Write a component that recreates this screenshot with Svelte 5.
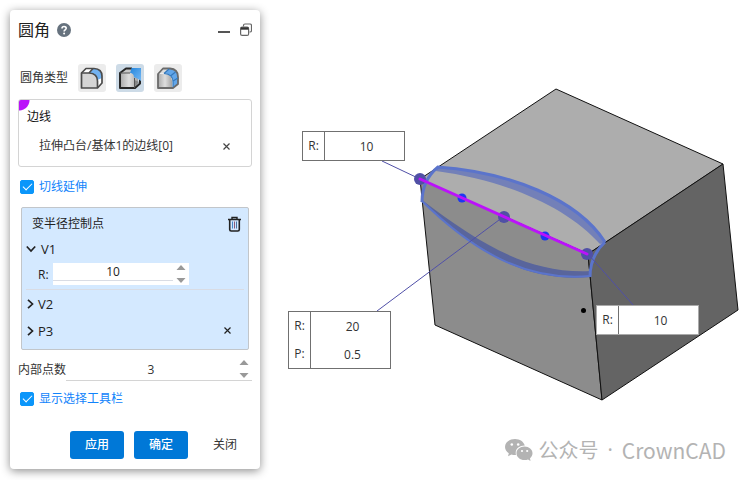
<script lang="ts">
	let filletType = $state('variable');
	let tangent = $state(true);
	let showToolbar = $state(true);
	let expanded = $state(true);
	let radius = $state(10);
	let count = $state(3);

	const filletTypes = [
		{ id: 'constant', label: '等半径' },
		{ id: 'variable', label: '变半径' },
		{ id: 'face', label: '面圆角' }
	];

	const callouts = [
		{ id: 'v1', x: 302, y: 131, rows: [{ name: 'R:', value: '10' }] },
		{
			id: 'p3',
			x: 288,
			y: 311,
			rows: [
				{ name: 'R:', value: '20' },
				{ name: 'P:', value: '0.5' }
			]
		},
		{ id: 'v2', x: 596, y: 305, rows: [{ name: 'R:', value: '10' }] }
	];
</script>

{#snippet spinner(up: () => void, down: () => void)}
	<span class="spinner">
		<button aria-label="增加" onclick={up}>
			<svg width="10" height="5" viewBox="0 0 10 5"><path d="M5 0 9.500 5H.5Z" /></svg>
		</button>
		<button aria-label="减少" onclick={down}>
			<svg width="10" height="5" viewBox="0 0 10 5"><path d="M5 5 9.500 0H.5Z" /></svg>
		</button>
	</span>
{/snippet}

<main class="workspace">
	<svg class="scene" aria-hidden="true">
		<g stroke="#111" stroke-width="1" stroke-linejoin="round">
			<path fill="#adadad" d="M420 179 556 89 723 164 588 254Z" />
			<path fill="#8c8c8c" d="M420 179 588 254 602 400 435 325Z" />
			<path fill="#646464" d="M588 254 723 164 738 310 602 400Z" />
		</g>
		<!-- fillet preview -->
		<path
			fill="#7380b8"
			d="M438 167C510 172 577 199 605 242L600 244C567 207 505 180 436 171Z"
		/>
		<path fill="#59659c" d="M422 201C472 250 525 283 590 277V271C525 274 475 240 422 200Z" />
		<g fill="none" stroke="#5b74cb" stroke-width="2">
			<path d="M437 167C510 172 577 199 605 242" stroke-width="3" />
			<path d="M422 201C472 250 525 282 590 276" />
			<path d="M438 167Q422 180 422 202" stroke-width="3" />
			<path d="M605 242Q590 256 590 277" stroke-width="3" />
		</g>
		<g stroke="#5050a8" stroke-width="1">
			<path d="M382 161 420 179M377 311 503 217M588 254 634 306" />
		</g>
		<g fill="#5050a5">
			<circle cx="420" cy="179" r="6" />
			<circle cx="504" cy="217" r="6" />
			<circle cx="587" cy="254" r="6" />
		</g>
		<g fill="#1c38f0">
			<circle cx="462" cy="198" r="4.500" />
			<circle cx="545" cy="236" r="4.500" />
		</g>
		<path d="M420 179 587 254" stroke="#bb12fa" stroke-width="3" stroke-linecap="round" />
		<circle cx="583.500" cy="310.500" r="2.500" fill="#000" />
	</svg>

	{#each callouts as callout (callout.id)}
		<div class="callout {callout.id}" style:left="{callout.x}px" style:top="{callout.y}px">
			{#each callout.rows as row (row.name)}
				<label>
					<span>{row.name}</span>
					<input type="text" value={row.value} />
				</label>
			{/each}
		</div>
	{/each}

	<section class="panel">
		<header>
			<h1>圆角</h1>
			<button class="plain" aria-label="帮助">
				<svg width="14" height="14" viewBox="0 0 14 14">
					<circle cx="7" cy="7" r="7" fill="#66727e" />
					<path
						d="M5 5.600C5 2.900 9.200 3 9.200 5.300 9.200 6.800 7.100 6.800 7.100 8.400"
						fill="none"
						stroke="#fff"
						stroke-width="1.600"
					/>
					<circle cx="7.100" cy="10.500" r="1" fill="#fff" />
				</svg>
			</button>
			<span class="tools">
				<button class="plain" aria-label="最小化">
					<svg width="12" height="14" viewBox="0 0 12 14"><path d="M0 9H12" stroke="#555" stroke-width="2" /></svg>
				</button>
				<button class="plain" aria-label="还原">
					<svg width="12" height="14" viewBox="0 0 12 14" fill="none" stroke="#666">
						<path d="M3.500 3.500V2.500Q3.500 1 5 1H10Q11.500 1 11.500 2.500V7.500Q11.500 9 10 9H9.500" stroke-width="1.200" />
						<rect x=".6" y="4.200" width="8" height="8.200" rx="1.500" fill="#fff" stroke-width="1.200" />
						<path d="M.8 5.500H8.500" stroke="#333" stroke-width="2.400" />
					</svg>
				</button>
			</span>
		</header>

		<div class="types">
			<span>圆角类型</span>
			{#each filletTypes as type (type.id)}
				<button
					aria-label={type.label}
					class:active={filletType === type.id}
					onclick={() => (filletType = type.id)}
				>
					<svg width="24" height="24" viewBox="0 0 24 24" stroke-linejoin="round">
						<defs>
							<linearGradient id="metal-{type.id}">
								<stop offset="0" stop-color="#a9a9a9" />
								<stop offset=".5" stop-color="#dedede" />
								<stop offset="1" stop-color="#a4a4a4" />
							</linearGradient>
							<linearGradient id="blue-{type.id}" x2="1" y2="1">
								<stop offset="0" stop-color="#2385dc" />
								<stop offset="1" stop-color="#75b9f5" />
							</linearGradient>
						</defs>
						{#if type.id === 'constant'}
							<path fill="#fff" d="M1.500 7 6 2.500H14Q22 3 22 10V17L17.500 22H1.500Z" />
							<path fill="#d5d5d5" d="M1.500 7H9Q17.500 7.500 17.500 15V22H1.500Z" />
							<path fill="#72b2f1" d="M9 7 13 2.500Q22 2.500 22 10V12L17.500 14Q16 7.500 9 7Z" />
							<g fill="none" stroke="#4c4c4c" stroke-width="1.700">
								<path d="M1.500 7 6 2.500H14Q22 3 22 10V17L17.500 22H1.500Z" />
								<path d="M1.500 7H9Q17.500 7.500 17.500 15V22M9 7 13 2.500" />
							</g>
						{:else if type.id === 'variable'}
							<path fill="url(#metal-{type.id})" d="M2 7 8 2.500H20V17L16.500 22H2Z" />
							<path d="M2 7 8 2.500H14L11.500 7Z" fill="#c7c7c7" />
							<path d="M16.500 14 21 16 16.500 21Z" fill="#858585" />
							<g fill="none" stroke="#272727" stroke-width="2">
								<path d="M14 2.500H8L2 7V22H17L22 17.500V12" />
								<path d="M2 7H12M16.500 12V22" stroke="#555" stroke-width="1" />
							</g>
							<path d="M12 7 13.500 2H23V15Q18 11 16 11.500 16 7 12 7Z" fill="url(#blue-{type.id})" />
						{:else}
							<path fill="url(#metal-{type.id})" d="M2 8H9Q16 9 16 15V22H2Z" />
							<path fill="#62a6ea" d="M8 7 13 2.500Q22 3 22 11V18L17 22V15Q16 8 8 7Z" />
							<path fill="#ddd" d="M2 7 7 2.500H13L8 7Z" />
							<g fill="none" stroke="#6b6b6b" stroke-width="1.800">
								<path d="M2 8 7 2.500H14Q22 3 22 11V18L17 22H2Z" />
							</g>
							<path
								d="M8 7.500Q17 8 17 16V21M8 7.500 13 3M14.500 10 19.500 6M17 15 22 12"
								fill="none"
								stroke="#3579bb"
								stroke-width="1.200"
							/>
						{/if}
					</svg>
				</button>
			{/each}
		</div>

		<div class="edges">
			<div class="edges-title">边线</div>
			<div class="edge">
				<span>拉伸凸台/基体1的边线[0]</span>
				<button class="plain" aria-label="移除">
					<svg width="7" height="7" viewBox="0 0 7 7"><path d="M.5.5 6.500 6.500M6.500.5.5 6.500" stroke="#444" stroke-width="1.200" /></svg>
				</button>
			</div>
		</div>

		<label class="check">
			<input type="checkbox" bind:checked={tangent} />
			<span>切线延伸</span>
		</label>

		<div class="points">
			<div class="points-head">
				<span>变半径控制点</span>
				<button class="plain" aria-label="清空">
					<svg width="13" height="16" viewBox="0 0 13 16" fill="none" stroke="#222">
						<path d="M0 3.500H13M4 3V1.500H9V3" stroke-width="1.400" />
						<path d="M1.700 3.500V13.500Q1.700 15 3.200 15H9.800Q11.300 15 11.300 13.500V3.500" stroke-width="1.600" />
						<path d="M4.500 5.500V12.500" stroke="#4a88c4" />
						<path d="M6.500 5.500V12.500" stroke="#8a5a78" />
						<path d="M8.500 5.500V12.500" stroke="#4a78a4" />
					</svg>
				</button>
			</div>
			<button class="node" onclick={() => (expanded = !expanded)}>
				<svg width="10" height="10" viewBox="0 0 10 10"><path d="M.8 2.500 5 7 9.200 2.500" /></svg>
				V1
			</button>
			{#if expanded}
				<div class="radius">
					<label for="radius">R:</label>
					<div class="number">
						<input id="radius" type="number" bind:value={radius} />
						{@render spinner(() => radius++, () => radius--)}
					</div>
				</div>
			{/if}
			<div class="line">
				<button class="node closed">
					<svg width="7" height="10" viewBox="0 0 7 10"><path d="M1 .8 5.500 5 1 9.200" /></svg>
					V2
				</button>
			</div>
			<div class="line last">
				<button class="node closed">
					<svg width="7" height="10" viewBox="0 0 7 10"><path d="M1 .8 5.500 5 1 9.200" /></svg>
					P3
				</button>
				<button class="plain" aria-label="删除 P3">
					<svg width="7" height="7" viewBox="0 0 7 7"><path d="M.5.5 6.500 6.500M6.500.5.5 6.500" stroke="#222" stroke-width="1.200" /></svg>
				</button>
			</div>
		</div>

		<div class="count">
			<label for="count">内部点数</label>
			<div class="number">
				<input id="count" type="number" bind:value={count} />
				{@render spinner(() => count++, () => count--)}
			</div>
		</div>

		<label class="check">
			<input type="checkbox" bind:checked={showToolbar} />
			<span>显示选择工具栏</span>
		</label>

		<footer>
			<button class="primary">应用</button>
			<button class="primary">确定</button>
			<button>关闭</button>
		</footer>
	</section>

	<div class="watermark">
		<svg width="28" height="24" viewBox="0 0 28 24">
			<path
				fill="#b3b3b3"
				d="M10 1C4.500 1 0 4.500 0 9 0 11.500 1.500 13.800 3.800 15.200L3 18.200 6.500 16.500Q8.500 17.200 11 17C9.500 11.500 14 7.500 19.800 7.600 18.800 3.800 14.800 1 10 1Z"
			/>
			<path
				fill="#b3b3b3"
				d="M19.500 8.500C15 8.500 11.500 11.500 11.500 15.200 11.500 19 15 22 19.500 22Q21.500 22 23 21.400L25.500 23 25 20.200C26.500 19 27.500 17.200 27.500 15.200 27.500 11.500 24 8.500 19.500 8.500Z"
			/>
			<g fill="#fff">
				<circle cx="6.800" cy="6.500" r="1.300" />
				<circle cx="13.200" cy="6.500" r="1.300" />
				<circle cx="17" cy="13" r="1.100" />
				<circle cx="22.200" cy="13" r="1.100" />
			</g>
		</svg>
		<span>公众号</span>
		<span class="dot">·</span>
		<span class="brand">CrownCAD</span>
	</div>
</main>

<style>
	:global(body) {
		margin: 0;
		background: #fff;
	}

	.workspace {
		position: relative;
		box-sizing: border-box;
		min-height: 100vh;
		padding: 10px;
		overflow: hidden;
		font-family: 'Open Sans', 'Noto Sans CJK SC', sans-serif;
		font-size: 12px;
		line-height: 20px;
		color: #333;
	}

	.workspace * {
		box-sizing: border-box;
	}

	svg {
		display: block;
		flex: none;
	}

	button,
	input {
		margin: 0;
		padding: 0;
		border: none;
		background: none;
		font: inherit;
		color: inherit;
	}

	button {
		cursor: pointer;
	}

	.scene {
		position: absolute;
		inset: 0;
		width: 100%;
		height: 100%;
	}

	.callout {
		position: absolute;
		display: flex;
		flex-direction: column;
		border: 1px solid #707070;
		background: #fff;
	}

	.callout.v2 {
		border-color: #aaa;
	}

	.callout label {
		display: flex;
	}

	.callout span {
		width: 22px;
		border-right: 1px solid #707070;
		line-height: 28px;
		text-align: center;
	}

	.callout input {
		width: 79px;
		height: 28px;
		padding-left: 4px;
		text-align: center;
	}

	.panel {
		position: relative;
		display: flex;
		flex-direction: column;
		width: 250px;
		max-width: 100%;
		padding: 0 8px 10px;
		border-radius: 4px;
		background: #fff;
		box-shadow: 0 2px 10px rgba(0, 0, 0, 0.45);
	}

	header {
		display: flex;
		align-items: center;
		gap: 7px;
		height: 40px;
	}

	h1 {
		margin: 0;
		font-size: 16px;
		font-weight: 400;
		color: #222;
	}

	.plain {
		display: flex;
		align-items: center;
	}

	.tools {
		display: flex;
		gap: 10px;
		margin-left: auto;
	}

	.types {
		display: flex;
		align-items: center;
		gap: 10px;
		margin: 14px 2px 7px;
	}

	.types button {
		display: grid;
		place-items: center;
		width: 28px;
		height: 28px;
		border-radius: 3px;
		background: #ececec;
	}

	.types button.active {
		background: #cddbe7;
	}

	.edges {
		height: 68px;
		padding: 7px 8px;
		border: 1px solid #d4d4d4;
		border-radius: 3px;
		background: radial-gradient(circle at 0 0, #bb12fa 10px, transparent 11px) no-repeat;
	}

	.edges-title {
		color: #111;
	}

	.edge {
		display: flex;
		justify-content: space-between;
		margin-top: 9px;
		padding: 0 13px 0 12px;
	}

	.check {
		display: flex;
		align-items: center;
		gap: 5px;
		margin: 10px 2px;
		color: #1183fb;
		cursor: pointer;
	}

	.check input {
		appearance: none;
		display: grid;
		place-items: center;
		width: 14px;
		height: 14px;
		border: 1px solid #0b96fa;
		border-radius: 2px;
	}

	.check input:checked {
		background: #0b96fa;
	}

	.check input:checked::before {
		content: '';
		width: 8px;
		height: 4px;
		margin-bottom: 3px;
		border: solid #fff;
		border-width: 0 0 1px 1px;
		transform: rotate(-45deg);
	}

	.points {
		margin: 0 3px;
		padding: 6px 4px 5px;
		border: 1px solid #c2c6ca;
		border-radius: 2px;
		background: #d4e9ff;
		color: #222;
	}

	.points-head {
		display: flex;
		justify-content: space-between;
		padding: 0 3px 0 6px;
	}

	.node {
		display: flex;
		align-items: center;
		gap: 5px;
		height: 27px;
		margin-top: 1px;
		font-size: 13px;
	}

	.node.closed {
		gap: 4px;
		margin-top: 0;
		padding-left: 1px;
	}

	.node path {
		fill: none;
		stroke: #222;
		stroke-width: 1.7;
	}

	.radius {
		display: flex;
		align-items: center;
		gap: 3px;
		padding: 1px 0 4px 12px;
	}

	.radius label {
		width: 12px;
		padding-top: 2px;
	}

	.number {
		display: flex;
	}

	.number input {
		appearance: textfield;
		width: 120px;
		height: 18px;
		border-bottom: 1px solid #d9dce4;
		text-align: center;
	}

	.number input::-webkit-inner-spin-button {
		appearance: none;
	}

	.radius .number {
		height: 22px;
		background: #fff;
	}

	.spinner {
		display: flex;
		flex-direction: column;
		justify-content: space-between;
		width: 16px;
		padding: 2px 3px;
		fill: #999;
	}

	.spinner button {
		display: block;
	}

	.line {
		display: flex;
		align-items: center;
		justify-content: space-between;
		padding-right: 13px;
		border-top: 1px solid #d9dce4;
	}

	.line.last {
		border-top: none;
	}

	.count {
		display: flex;
		align-items: center;
		margin-top: 8px;
	}

	.count .number {
		flex: 1;
		height: 23px;
		border-bottom: 1px solid #d4d4d4;
	}

	.count input {
		flex: 1;
		width: 0;
		height: 22px;
		border-bottom: none;
	}

	.count + .check {
		margin-top: 8px;
	}

	footer {
		display: flex;
		justify-content: flex-end;
		gap: 10px;
		margin-top: 12px;
	}

	footer button {
		width: 54px;
		height: 28px;
		border-radius: 3px;
	}

	footer .primary {
		background: #0078d7;
		color: #fff;
		font-weight: 500;
	}

	.watermark {
		position: absolute;
		right: 24px;
		bottom: 15px;
		display: flex;
		align-items: center;
		gap: 5px;
		font-family: 'Noto Sans CJK SC', sans-serif;
		font-size: 20px;
		line-height: 30px;
		color: #b3b3b3;
	}

	.watermark .dot {
		margin: 0 4px;
		font-family: 'Noto Sans', sans-serif;
	}

	.watermark .brand {
		font-size: 21px;
	}
</style>
